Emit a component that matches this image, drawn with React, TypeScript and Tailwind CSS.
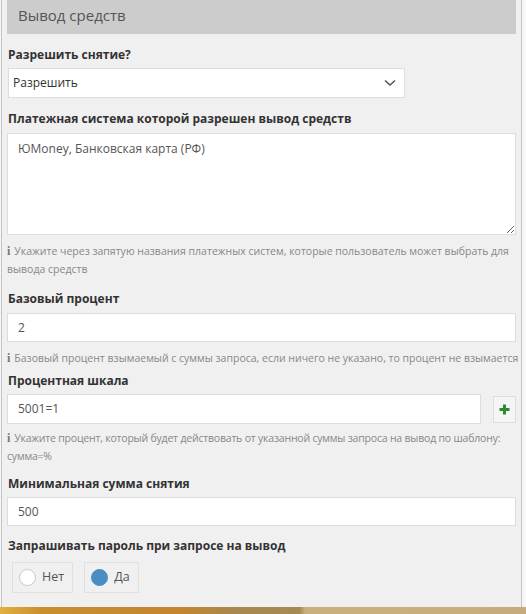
import React from 'react';

const font = { fontFamily: '"Open Sans", "Noto Sans", sans-serif' };

const Label: React.FC<{ children: React.ReactNode; className?: string }> = ({ children, className = '' }) => (
  <div className={`ml-px text-[12px] font-bold leading-[18px] text-[#333] ${className}`}>{children}</div>
);

const Help: React.FC<{ children: React.ReactNode; className?: string }> = ({ children, className = '' }) => (
  <div className={`text-[10.5px] leading-[18px] text-[#888] ${className}`}>
    <span className="mr-[4px] font-bold text-[#777]" style={{ fontFamily: '"Liberation Serif", serif', fontSize: 12 }}>
      i
    </span>
    {children}
  </div>
);

const TextInput: React.FC<{ value: string; className?: string }> = ({ value, className = '' }) => (
  <div className={`flex h-[29px] items-center border border-[#ddd] bg-white pl-[10px] text-[12px] text-[#555] ${className}`}>
    {value}
  </div>
);

const Radio: React.FC<{ label: string; checked?: boolean }> = ({ label, checked }) => (
  <div className="flex h-[31px] items-center gap-[6px] border border-[#e0e0e0] pl-[6px] pr-[8px]">
    <span
      className={`block h-[17px] w-[17px] rounded-full border ${
        checked ? 'border-[#4a8cc3] bg-[#4a8cc3]' : 'border-[#c8c8c8] bg-white'
      }`}
    />
    <span className="text-[12.5px] text-[#555]">{label}</span>
  </div>
);

export default function App() {
  return (
    <div className="flex h-[614px] w-[526px] flex-col bg-[#f6f6f6]" style={font}>
      <div className="flex flex-1 pl-px">
        <div className="w-[521px] border-x border-[#c4c4c4] bg-[#f0f0f0] pl-[5px] pr-[5px]">
          <div className="h-[34px] bg-[#cccccc] pl-[11px] pt-[4px] text-[15px] leading-[22px] text-[#555]">
            Вывод средств
          </div>

          <Label className="mt-3">Разрешить снятие?</Label>
          <div className="ml-px mt-[4px] flex h-[30px] w-[397px] items-center justify-between border border-[#ddd] bg-white pl-[4px] pr-[8px] text-[12px] text-[#333]">
            <span>Разрешить</span>
            <svg width="12" height="8" viewBox="0 0 12 8" fill="none">
              <path d="M1 1.5l5 4.5 5-4.5" stroke="#555" strokeWidth="1.6" />
            </svg>
          </div>

          <Label className="mt-3">Платежная система которой разрешен вывод средств</Label>
          <textarea
            defaultValue="ЮMoney, Банковская карта (РФ)"
            className="mt-[5px] block h-[102px] w-[509px] border border-[#ddd] bg-white px-[10px] py-[6px] text-[12px] leading-[18px] text-[#555] outline-none"
          />
          <Help className="mt-[7px]">
            Укажите через запятую названия платежных систем, которые пользователь может выбрать для вывода средств
          </Help>

          <Label className="mt-3">Базовый процент</Label>
          <TextInput value="2" className="mt-[5px] w-[509px]" />
          <Help className="mt-[7px] whitespace-nowrap">
            Базовый процент взымаемый с суммы запроса, если ничего не указано, то процент не взымается
          </Help>

          <Label className="mt-[5px]">Процентная шкала</Label>
          <div className="mt-[4px] flex items-center gap-3">
            <TextInput value="5001=1" className="h-[30px] w-[474px]" />
            <div className="flex h-[27px] w-[23px] items-center justify-center border border-[#ddd] bg-[#f5f5f5]">
              <svg width="11" height="11" viewBox="0 0 11 11">
                <path d="M5.5 0.5v10M0.5 5.5h10" stroke="#2f8a2f" strokeWidth="3" />
              </svg>
            </div>
          </div>
          <Help className="mt-[5px] tracking-[-0.2px]">
            Укажите процент, который будет действовать от указанной суммы запроса на вывод по шаблону: сумма=%
          </Help>

          <Label className="mt-[10px]">Минимальная сумма снятия</Label>
          <TextInput value="500" className="mt-[4px] w-[509px]" />

          <Label className="mt-[11px]">Запрашивать пароль при запросе на вывод</Label>
          <div className="ml-[5px] mt-[7px] flex gap-[11px]">
            <Radio label="Нет" />
            <Radio label="Да" checked />
          </div>
        </div>
      </div>
      <div className="h-[7px] bg-[linear-gradient(to_right,#e0b040_0%,#c98f2e_8%,#c2842f_35%,#a9884e_44%,#a58a55_57%,#c8b07e_58%,#c4ac7c_100%)]" />
    </div>
  );
}
